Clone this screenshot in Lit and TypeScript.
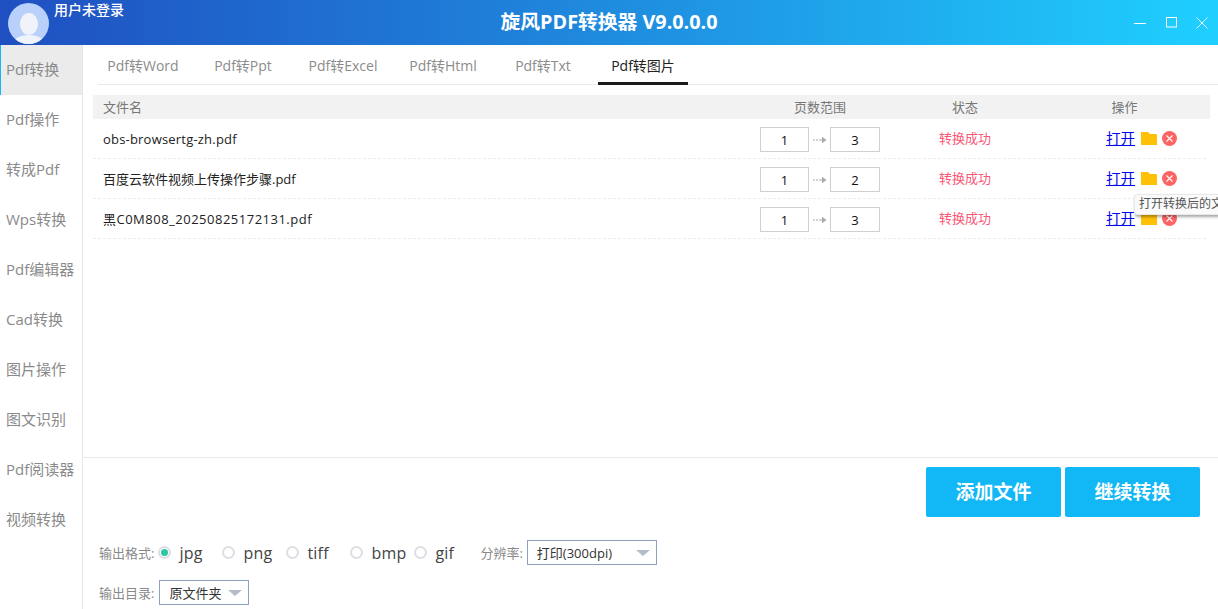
import { LitElement, html, css } from "lit";
import { customElement } from "lit/decorators.js";

const NAV = ["Pdf转换","Pdf操作","转成Pdf","Wps转换","Pdf编辑器","Cad转换","图片操作","图文识别","Pdf阅读器","视频转换"];
const TABS = ["Pdf转Word","Pdf转Ppt","Pdf转Excel","Pdf转Html","Pdf转Txt","Pdf转图片"];
const ROWS = [
  { name: "obs-browsertg-zh.pdf", a: 1, b: 3, cls: "s1" },
  { name: "百度云软件视频上传操作步骤.pdf", a: 1, b: 2, cls: "" },
  { name: "黑C0M808_20250825172131.pdf", a: 1, b: 3, cls: "s3" },
];
const FORMATS = ["jpg","png","tiff","bmp","gif"];

@customElement("app-root")
export class AppRoot extends LitElement {
  static styles = css`
    :host { display: block; width: 1218px; height: 609px; overflow: hidden; position: relative; background: #fff;
      font-family: "Open Sans", "Noto Sans CJK SC", sans-serif; font-size: 14px; color: #222; }
    .header { height: 45px; display: flex; align-items: center; position: relative;
      background: linear-gradient(90deg, #1f4fc1 0%, #1f7ed8 40%, #1fb4f2 80%, #1fd0ff 100%); color: #fff; }
    .avatar { width: 41px; height: 41px; margin: 1px 0 0 8px; flex: none; }
    .user { align-self: flex-start; margin: 1px 0 0 5px; font-size: 14px; font-weight: 500; line-height: 18px; }
    .title { position: absolute; left: 0; right: 0; top: 9px; text-align: center; font-size: 19.8px; font-weight: 700; line-height: 26px; }
    .winbtns { margin-left: auto; display: flex; align-items: center; padding-right: 10px; }
    .winbtns svg { display: block; }
    .max { margin: 0 19px 0 20px; }
    .body { display: flex; height: 564px; }
    .side { width: 83px; flex: none; box-sizing: border-box; border-right: 1px solid #e8e8e8; }
    .nav { height: 50px; line-height: 48px; padding-left: 6px; color: #8a8a8a; font-size: 15px; box-sizing: border-box; white-space: nowrap; }
    .nav.on { background: #ebebeb; border-left: 1px solid #12b7f5; padding-left: 5px; }
    .main { flex: 1; display: flex; flex-direction: column; min-width: 0; }
    .tabs { display: flex; gap: 10px; height: 40px; margin-left: 15px; border-bottom: 1px solid #e9e9e9; box-sizing: border-box; }
    .tab { width: 90px; height: 40px; box-sizing: border-box; line-height: 41px; color: #8c8c8c; font-size: 14px; text-align: center; white-space: nowrap; }
    .tab.on { color: #222; border-bottom: 3px solid #1a1a1a; }
    .table { margin: 10px 8px 0 10px; }
    .row { display: grid; grid-template-columns: 630px 194px 96px 1fr; align-items: center; }
    .thead { height: 24px; background: #f2f2f2; color: #777; font-size: 13px; padding-bottom: 2px; box-sizing: border-box; }
    .thead > div { text-align: center; }
    .thead > div:first-child { text-align: left; padding-left: 10px; }
    .thead > div:nth-child(4) { padding-left: 26px; }
    .trow { height: 40px; border-bottom: 1px dashed #ececec; margin-right: 4px; box-sizing: border-box; }
    .fname { padding-left: 10px; font-size: 13px; color: #222; white-space: nowrap; }
    .fname.s1 { letter-spacing: 0.2px; }
    .fname.s3 { letter-spacing: 0.5px; }
    .range { display: flex; align-items: center; justify-content: center; margin-top: 2px; }
    .num { width: 49px; height: 25px; box-sizing: border-box; border: 1px solid #d0d0d0; text-align: center; line-height: 24px; font-size: 13px; color: #111; }
    .num.end { width: 50px; }
    .arrow { width: 21px; display: flex; justify-content: center; }
    .status { text-align: center; color: #fb5674; font-size: 13px; padding-bottom: 2px; }
    .ops { display: flex; align-items: center; padding-left: 93px; }
    .ops a { color: #0000ee; text-decoration: underline; font-size: 14.5px; line-height: 20px; margin-right: 6px; padding-top: 1px; }
    .ops svg { display: block; }
    .ops .x { margin-left: 5px; }
    .spacer { flex: 1; }
    .foot { height: 152px; box-sizing: border-box; border-top: 1px solid #e9e9e9; }
    .btns { display: flex; justify-content: flex-end; gap: 4px; padding: 9px 18px 0 0; }
    .btn { width: 135px; height: 50px; background: #12b7f5; border-radius: 2px; color: #fff; font-size: 19px; font-weight: 700; text-align: center; line-height: 50px; }
    .opts { display: flex; align-items: center; height: 25px; margin: 23px 0 0 16px; }
    .opts2 { margin-top: 15px; }
    .opts2 .lbl { margin-right: 5px; }
    .lbl { color: #8a8a8a; font-size: 13px; white-space: nowrap; margin-right: 4px; }
    .lbl.res { margin-left: 2px; }
    .item { width: 64px; display: flex; align-items: center; gap: 8px; flex: none; }
    .radio { width: 13px; height: 13px; box-sizing: border-box; border: 2px solid #dcdfe3; border-radius: 50%; flex: none; position: relative; background: #fff; }
    .radio.on::after { content: ""; position: absolute; inset: 1px; border-radius: 50%; background: #2cc6a6; }
    .fmt { font-size: 16px; letter-spacing: 0.2px; color: #444; line-height: 20px; }
    .sel { height: 25px; box-sizing: border-box; border: 1px solid #8ba3c0; display: flex; align-items: center; font-size: 13px; color: #333; position: relative; padding-left: 9px; }
    .sel.wide { width: 130px; }
    .sel.narrow { width: 90px; }
    .tri { width: 0; height: 0; border-left: 7px solid transparent; border-right: 7px solid transparent; border-top: 6px solid #b4bcc8; position: absolute; right: 6px; top: 9px; }
    .tip { position: absolute; left: 1134px; top: 194px; width: 100px; height: 21px; box-sizing: border-box; background: #fafafa; border: 1px solid #e8e8e8; border-radius: 3px;
      box-shadow: 1px 2px 3px rgba(0,0,0,.35); font-size: 12px; line-height: 18px; padding-left: 4px; color: #555; white-space: nowrap; overflow: hidden; }
  `;

  private folder() {
    return html`<svg width="16" height="13" viewBox="0 0 16 13"><path d="M0 0h7l2 2h7v11H0z" fill="#ffc107"/></svg>`;
  }
  private close() {
    return html`<svg class="x" width="15" height="15" viewBox="0 0 15 15"><circle cx="7.5" cy="7.5" r="7.5" fill="#ff6464"/><path d="M4.5 4.5l6 6M10.5 4.5l-6 6" stroke="#fff" stroke-width="1.1"/></svg>`;
  }

  render() {
    return html`
      <div class="header">
        <svg class="avatar" viewBox="0 0 41 41">
          <defs><clipPath id="c"><circle cx="20.5" cy="20.5" r="20.5"/></clipPath></defs>
          <g clip-path="url(#c)">
            <rect width="41" height="41" fill="#b9d0fb"/>
            <ellipse cx="21" cy="21" rx="9" ry="11" fill="#f0f4fa"/>
            <ellipse cx="21" cy="42" rx="17" ry="10" fill="#f0f4fa"/>
          </g>
        </svg>
        <div class="user">用户未登录</div>
        <div class="title">旋风PDF转换器 V9.0.0.0</div>
        <div class="winbtns">
          <svg width="12" height="12" viewBox="0 0 12 12"><path d="M0 6.5h12" stroke="#fff" fill="none"/></svg>
          <svg class="max" width="11" height="11" viewBox="0 0 11 11"><rect x=".5" y=".5" width="10" height="9.5" stroke="#fff" fill="none"/></svg>
          <svg width="12" height="12" viewBox="0 0 12 12"><path d="M.5.5l11 11M11.5.5l-11 11" stroke="#fff" fill="none" stroke-width=".9"/></svg>
        </div>
      </div>
      <div class="body">
        <div class="side">
          ${NAV.map((n, i) => html`<div class="nav ${i === 0 ? "on" : ""}">${n}</div>`)}
        </div>
        <div class="main">
          <div class="tabs">
            ${TABS.map((t, i) => html`<div class="tab ${i === 5 ? "on" : ""}">${t}</div>`)}
          </div>
          <div class="table">
            <div class="row thead"><div>文件名</div><div>页数范围</div><div>状态</div><div>操作</div></div>
            ${ROWS.map(r => html`
              <div class="row trow">
                <div class="fname ${r.cls}">${r.name}</div>
                <div class="range">
                  <div class="num">${r.a}</div>
                  <div class="arrow"><svg width="14" height="8" viewBox="0 0 14 8"><path d="M0 4h2M3 4h2M6 4h4" stroke="#aaa" fill="none"/><path d="M9 .8L13.5 4 9 7.2z" fill="#aaa"/></svg></div>
                  <div class="num end">${r.b}</div>
                </div>
                <div class="status">转换成功</div>
                <div class="ops"><a>打开</a>${this.folder()}${this.close()}</div>
              </div>`)}
          </div>
          <div class="spacer"></div>
          <div class="foot">
            <div class="btns"><div class="btn">添加文件</div><div class="btn">继续转换</div></div>
            <div class="opts">
              <span class="lbl">输出格式:</span>
              ${FORMATS.map((f, i) => html`<span class="item"><span class="radio ${i === 0 ? "on" : ""}"></span><span class="fmt">${f}</span></span>`)}
              <span class="lbl res">分辨率:</span>
              <div class="sel wide">打印(300dpi)<span class="tri"></span></div>
            </div>
            <div class="opts opts2">
              <span class="lbl">输出目录:</span>
              <div class="sel narrow">原文件夹<span class="tri"></span></div>
            </div>
          </div>
        </div>
      </div>
      <div class="tip">打开转换后的文件</div>
    `;
  }
}
